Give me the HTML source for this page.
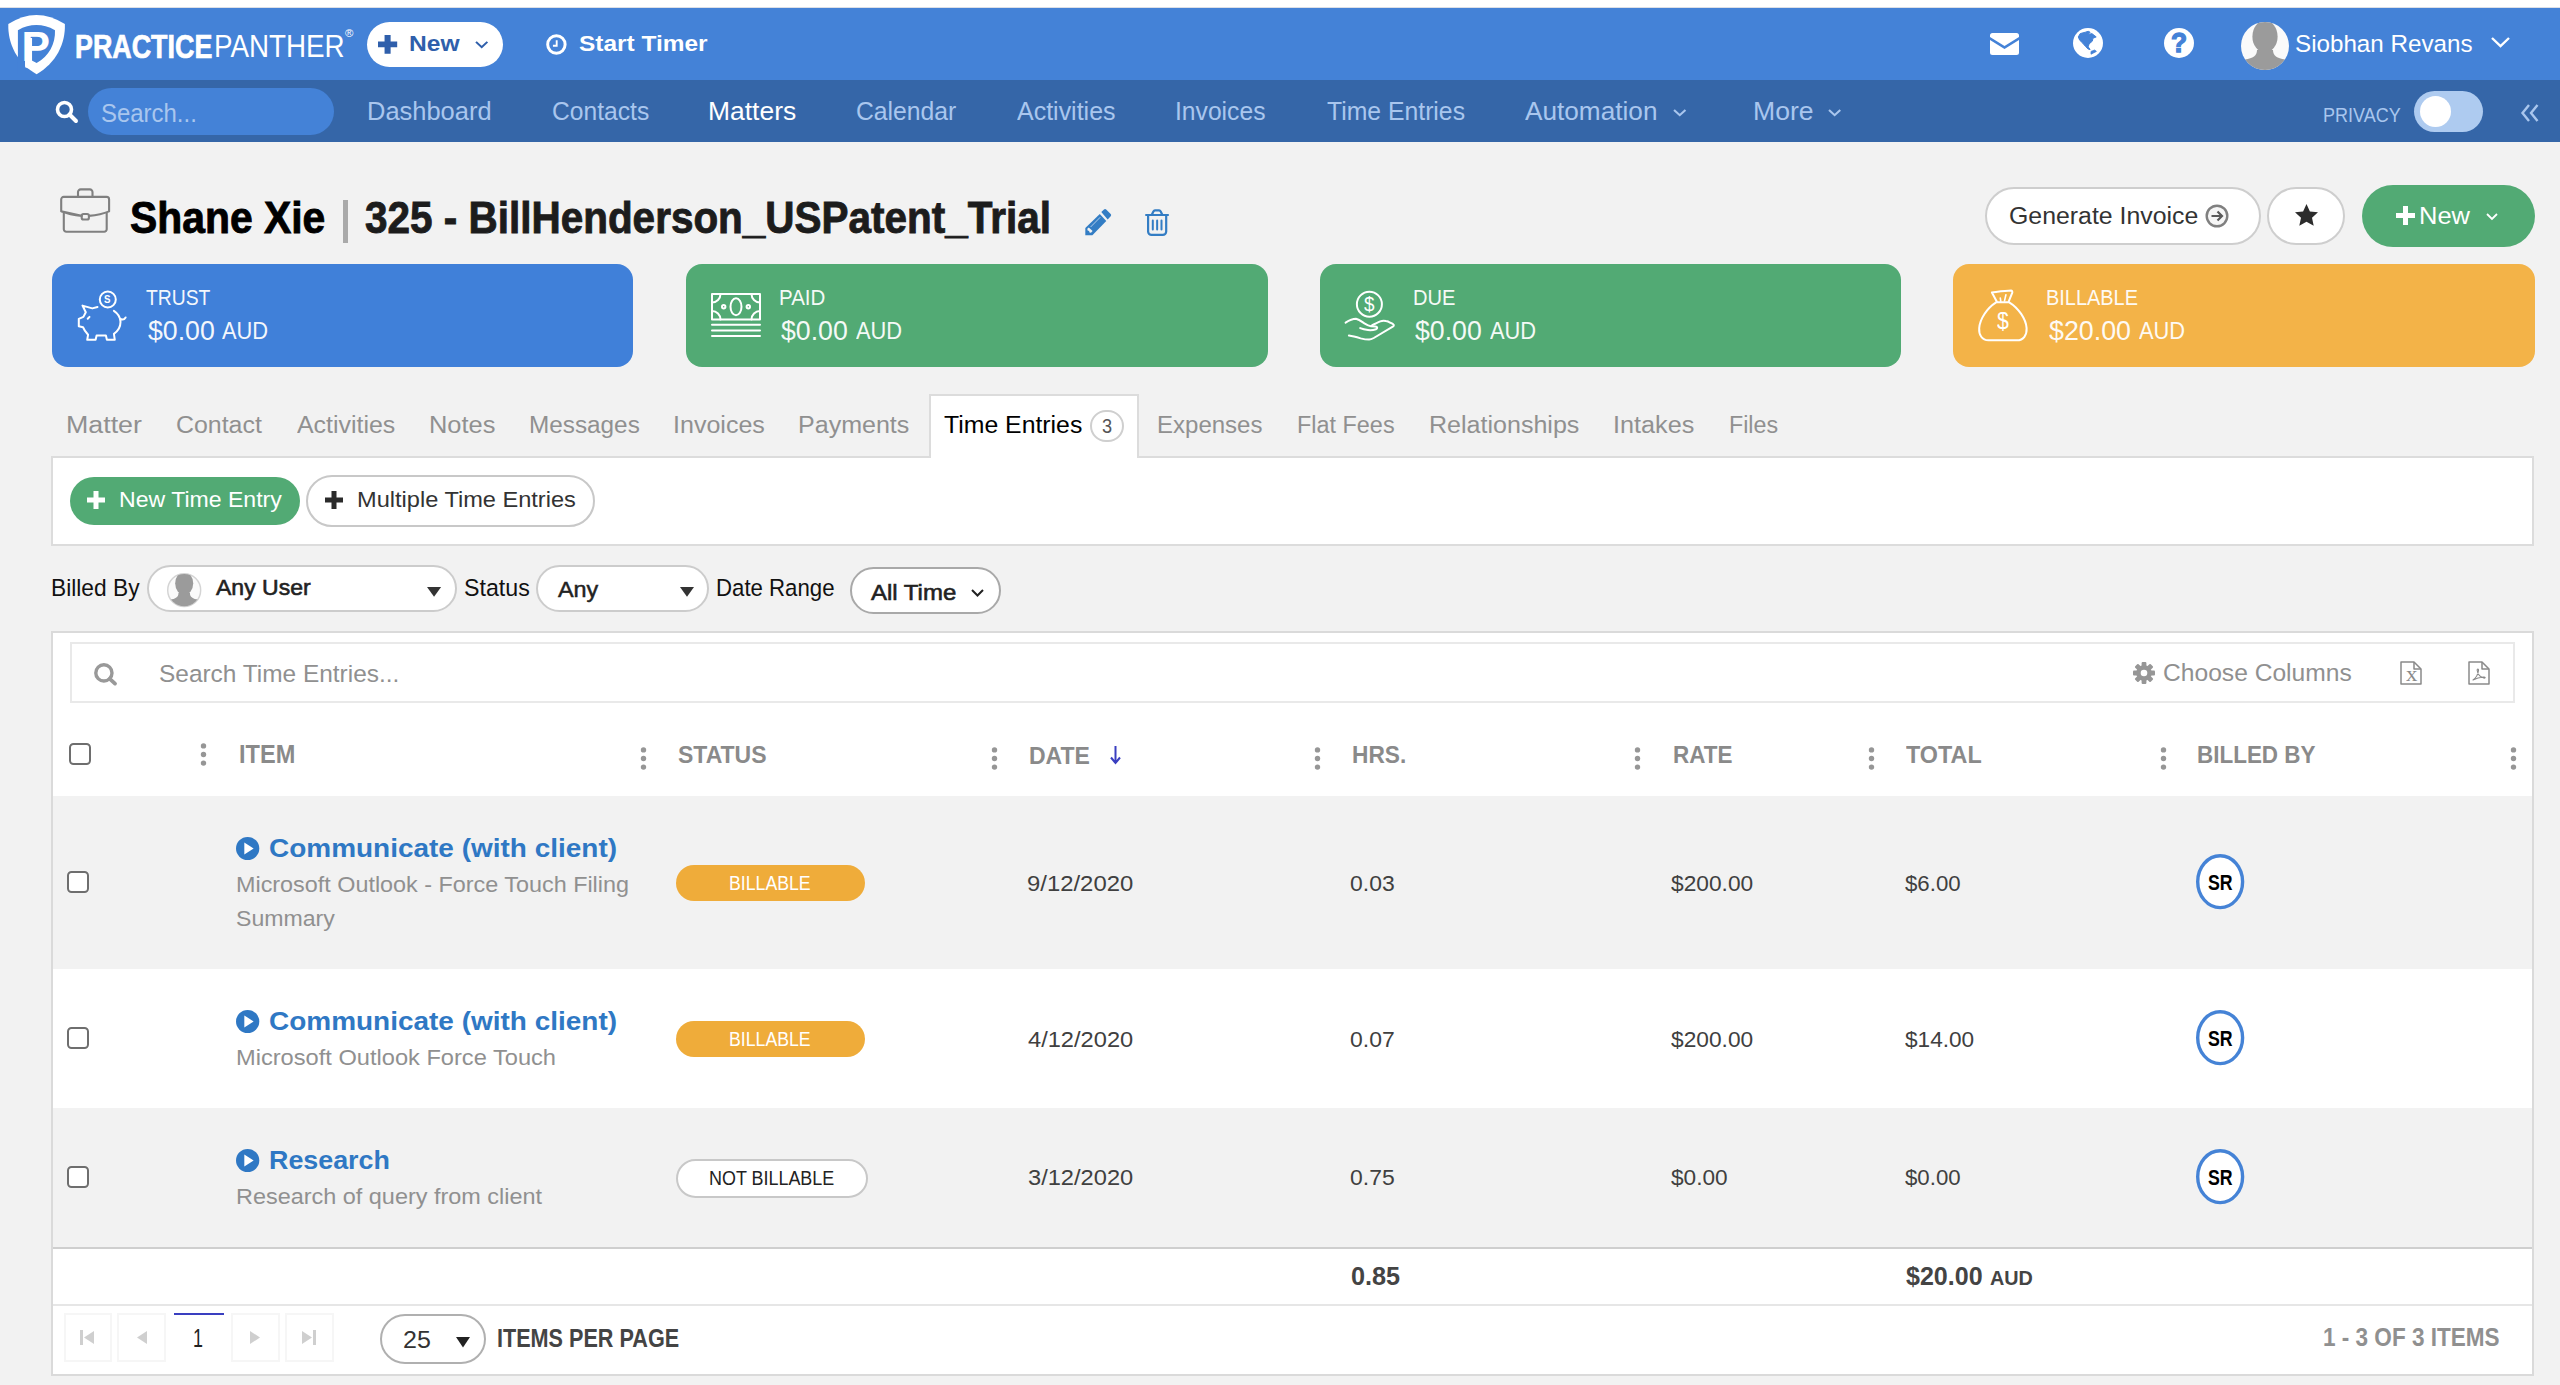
<!DOCTYPE html>
<html lang="en"><head><meta charset="utf-8"><title>PracticePanther - Time Entries</title>
<style>
html,body{margin:0;padding:0;}
body{width:2560px;height:1385px;overflow:hidden;position:relative;background:#f2f2f2;font-family:"Liberation Sans", sans-serif;}
.a{position:absolute;box-sizing:border-box;}
.t{position:absolute;white-space:nowrap;line-height:1;transform-origin:0 0;font-family:"Liberation Sans", sans-serif;}
svg{overflow:visible;}
</style></head><body>
<div class="a" style="left:0px;top:0px;width:2560px;height:8px;background:#ffffff;"></div>
<div class="a" style="left:0px;top:7px;width:2560px;height:1px;background:#dcdfe6;"></div>
<div class="a" style="left:0px;top:8px;width:2560px;height:72px;background:#4482d7;"></div>
<div class="a" style="left:0px;top:80px;width:2560px;height:62px;background:#3566a8;"></div>
<svg class="a" style="left:0px;top:8px;" width="70" height="72" viewBox="0 0 70 72" preserveAspectRatio="none">
<path d="M8.3 16Q36.3 -2.2 64.9 16C65.5 36 56 55 36.6 66.2C17.2 55 7.7 36 8.3 16Z" fill="#fff"/>
<path d="M17.9 22.2Q36.3 12 55 22.2C55.5 36 49 48 36.6 55L25.1 48.9V66H17.9Z" fill="#4482d7"/>
<path d="M25.1 30H32.05V62L25.1 59.3Z" fill="#fff"/>
<text x="21.6" y="52.6" font-family="Liberation Sans, sans-serif" font-weight="bold" font-size="42.7" fill="#fff" transform="translate(21.6 0) scale(1.0 1) translate(-21.6 0)">P</text>
</svg>
<span class="t" style="left:74.64px;top:30.87px;font-size:32.29px;color:#fff;transform:scaleX(0.8322);font-weight:bold;-webkit-text-stroke:0.7px #fff;">PRACTICE</span>
<span class="t" style="left:214.26px;top:31.21px;font-size:31.88px;color:#fff;transform:scaleX(0.8712);">PANTHER</span>
<span class="t" style="left:345.0px;top:28.37px;font-size:11.38px;color:#fff;transform:scaleX(1.0);">®</span>
<div class="a" style="left:367px;top:22px;width:136px;height:45px;background:#fff;border-radius:23px;"></div>
<svg class="a" style="left:377.6px;top:34.6px;" width="19.19999999999999" height="18.799999999999997" viewBox="0 0 19 19" preserveAspectRatio="none"><path d="M6.500 0h6v6.500h6.500v6h-6.500v6.500h-6v-6.500H0v-6h6.500z" fill="#2f5fab"/></svg>
<span class="t" style="left:408.91px;top:33.10px;font-size:22.56px;color:#2f5fab;transform:scaleX(1.0912);font-weight:bold;">New</span>
<svg class="a" style="left:475.3px;top:41.3px;" width="13.399999999999977" height="7.5" viewBox="0 0 13 8" preserveAspectRatio="none"><path d="M1 1l5.5 5.5L12 1" fill="none" stroke="#2f5fab" stroke-width="2"/></svg>
<svg class="a" style="left:546.2px;top:34px;" width="20.799999999999955" height="21" viewBox="0 0 21 21" preserveAspectRatio="none"><circle cx="10.500" cy="10.500" r="8.800" fill="none" stroke="#fff" stroke-width="3"/><path d="M10.800 6.200v5.600H7" fill="none" stroke="#fff" stroke-width="1.900"/></svg>
<span class="t" style="left:578.7px;top:33.10px;font-size:22.56px;color:#fff;transform:scaleX(1.0829);font-weight:bold;">Start Timer</span>
<svg class="a" style="left:1990px;top:33px;" width="29" height="22" viewBox="0 0 29 22" preserveAspectRatio="none"><path d="M2.5 0h24a2.5 2.5 0 0 1 2.5 2.5V4L14.5 13 0 4V2.5A2.500 2.500 0 0 1 2.500 0z" fill="#fff"/><path d="M0 7l14.500 9L29 7v12.500a2.500 2.500 0 0 1-2.500 2.500h-24A2.500 2.500 0 0 1 0 19.500z" fill="#fff"/></svg>
<svg class="a" style="left:2073px;top:27.8px;" width="30" height="29.999999999999996" viewBox="0 0 30 30" preserveAspectRatio="none"><circle cx="15" cy="15" r="15" fill="#fff"/><path d="M5.300 8.900L7.200 5.600 12.400 4.200 15.200 3.300 17.100 4.200 15.200 6.600 18.900 5.600 23.200 8.900 19.900 10.300 19.400 13.100 16.100 15.900 15.200 18.800 17.100 21.600 15.200 21.100 12.400 18.300 9.600 15 6.700 12.200Z" fill="#4482d7" stroke="#4482d7" stroke-width="1" stroke-linejoin="round"/><path d="M18 23.400L21.700 22 23.400 23.400 18 26.200Z" fill="#4482d7" stroke="#4482d7" stroke-width=".8" stroke-linejoin="round"/></svg>
<svg class="a" style="left:2164px;top:27.8px;" width="30" height="29.999999999999996" viewBox="0 0 30 30" preserveAspectRatio="none"><circle cx="15" cy="15" r="15" fill="#fff"/></svg>
<span class="t" style="left:2170.84px;top:29.48px;font-size:27.43px;color:#4482d7;transform:scaleX(0.96);font-weight:bold;-webkit-text-stroke:1.3px #4482d7;">?</span>
<svg class="a" style="left:2240.8px;top:22px;" width="48.0" height="48" viewBox="0 0 48 48" preserveAspectRatio="none"><defs><clipPath id="av1"><circle cx="24" cy="24" r="24"/></clipPath></defs><circle cx="24" cy="24" r="24" fill="#fafafa"/><g clip-path="url(#av1)" fill="#9b9b9b"><ellipse cx="24" cy="14.500" rx="12.600" ry="16"/><path d="M16 28C16 34 12 36 4 37.500L-2 38V50H50V38L44 37.500C36 36 32 34 32 28Z"/></g></svg>
<span class="t" style="left:2295.38px;top:33.04px;font-size:23.7px;color:#fff;transform:scaleX(1.021);">Siobhan Revans</span>
<svg class="a" style="left:2491px;top:37px;" width="19" height="10" viewBox="0 0 19 10" preserveAspectRatio="none"><path d="M1 1l8.5 8L18 1" fill="none" stroke="#fff" stroke-width="2.4"/></svg>
<svg class="a" style="left:55px;top:100px;" width="23" height="23" viewBox="0 0 23 23" preserveAspectRatio="none"><circle cx="9.500" cy="9.500" r="7" fill="none" stroke="#fff" stroke-width="3.600"/><path d="M14.500 14.500l6.500 6.500" stroke="#fff" stroke-width="4" stroke-linecap="round"/></svg>
<div class="a" style="left:88px;top:88px;width:246px;height:47px;background:#4482d7;border-radius:24px;"></div>
<span class="t" style="left:101.04px;top:100.89px;font-size:24.94px;color:#a9c6ee;transform:scaleX(0.96);">Search...</span>
<span class="t" style="left:366.67px;top:98.80px;font-size:25.05px;color:#a9c6ee;transform:scaleX(1.0167);">Dashboard</span>
<span class="t" style="left:551.82px;top:98.80px;font-size:25.05px;color:#a9c6ee;transform:scaleX(0.9834);">Contacts</span>
<span class="t" style="left:707.89px;top:98.80px;font-size:25.05px;color:#fff;transform:scaleX(1.0558);">Matters</span>
<span class="t" style="left:856.01px;top:98.80px;font-size:25.05px;color:#a9c6ee;transform:scaleX(0.987);">Calendar</span>
<span class="t" style="left:1017.0px;top:98.80px;font-size:25.05px;color:#a9c6ee;transform:scaleX(0.997);">Activities</span>
<span class="t" style="left:1175.03px;top:98.80px;font-size:25.05px;color:#a9c6ee;transform:scaleX(0.9848);">Invoices</span>
<span class="t" style="left:1327.0px;top:98.80px;font-size:25.05px;color:#a9c6ee;transform:scaleX(0.9884);">Time Entries</span>
<span class="t" style="left:1525.0px;top:98.80px;font-size:25.05px;color:#a9c6ee;transform:scaleX(1.0455);">Automation</span>
<span class="t" style="left:1752.88px;top:98.80px;font-size:25.05px;color:#a9c6ee;transform:scaleX(1.0622);">More</span>
<svg class="a" style="left:1672.8px;top:108.5px;" width="13.5" height="7.700000000000003" viewBox="0 0 13 8" preserveAspectRatio="none"><path d="M1 1l5.500 5.500L12 1" fill="none" stroke="#a9c6ee" stroke-width="2"/></svg>
<svg class="a" style="left:1828px;top:108.5px;" width="13.299999999999955" height="7.700000000000003" viewBox="0 0 13 8" preserveAspectRatio="none"><path d="M1 1l5.500 5.500L12 1" fill="none" stroke="#a9c6ee" stroke-width="2"/></svg>
<span class="t" style="left:2323.41px;top:104.52px;font-size:20.18px;color:#a9c6ee;transform:scaleX(0.8926);">PRIVACY</span>
<div class="a" style="left:2414px;top:91px;width:69px;height:41px;background:#aecbf0;border-radius:21px;"></div>
<div class="a" style="left:2420px;top:96px;width:31px;height:31px;background:#fff;border-radius:16px;"></div>
<svg class="a" style="left:2521px;top:104px;" width="18" height="18" viewBox="0 0 18 18" preserveAspectRatio="none"><path d="M8 1L1.500 9 8 17M16.500 1L10 9l6.500 8" fill="none" stroke="#a9c6ee" stroke-width="2.400"/></svg>
<svg class="a" style="left:60px;top:188px;" width="51" height="46" viewBox="0 0 51 46" preserveAspectRatio="none"><g fill="none" stroke="#808080" stroke-width="2.100" stroke-linejoin="round">
<path d="M1.200 23.400V11.400a2.500 2.500 0 0 1 2.500-2.500H46.600a2.500 2.500 0 0 1 2.500 2.500V23.400C43 26 36 27.300 28.900 27.900M21.700 27.900C14.500 27.300 7.500 26 1.200 23.400Z"/>
<path d="M3.800 24.500V41.200a2.500 2.500 0 0 0 2.500 2.500H44.200a2.500 2.500 0 0 0 2.500-2.500V24.500"/>
<path d="M18 8.900V4a2.600 2.600 0 0 1 2.600-2.600H29.900A2.600 2.600 0 0 1 32.500 4V8.900"/>
<rect x="21.700" y="26" width="7.200" height="5.500" rx="1.800"/></g></svg>
<span class="t" style="left:130.07px;top:195.76px;font-size:43.99px;color:#000;transform:scaleX(0.9289);font-weight:bold;-webkit-text-stroke:0.9px #000;">Shane Xie</span>
<div class="a" style="left:343px;top:200px;width:5px;height:43px;background:#aaaaaa;"></div>
<span class="t" style="left:365.08px;top:195.76px;font-size:43.99px;color:#1c1c1c;transform:scaleX(0.9201);font-weight:bold;-webkit-text-stroke:0.9px #1c1c1c;">325 - BillHenderson_USPatent_Trial</span>
<svg class="a" style="left:1084.9px;top:209.1px;" width="26.199999999999818" height="26.5" viewBox="0 0 26.2 26.5" preserveAspectRatio="none"><g fill="#337dc4"><path d="M16.300 3 19 .6a1.600 1.600 0 0 1 2.200 0L25.700 5a1.600 1.600 0 0 1 0 2.200L22.700 10.400Z"/><path d="M14.800 4.900L21.300 12 7.400 26.200H.3V19.100Z"/></g><path d="M5.600 18L15.300 8.200" stroke="#cfe0f2" stroke-width=".8" fill="none"/><path d="M2.300 19.800l1.500-1.300 3.800 3.600-1.600 1.700-1.500-.4-.4-1.500-1.500-.4z" fill="#f2f2f2"/></svg>
<svg class="a" style="left:1145px;top:208.6px;" width="24.09999999999991" height="27.099999999999994" viewBox="0 0 24.1 27.1" preserveAspectRatio="none"><g fill="none" stroke="#337dc4" stroke-width="2.200" stroke-linecap="round" stroke-linejoin="round"><path d="M1.100 6H23"/><path d="M6.800 5.700L8.400 2.400a1.800 1.800 0 0 1 1.600-1h4.100a1.800 1.800 0 0 1 1.600 1L17.300 5.700"/><path d="M3.100 6.500V22.500a3.400 3.400 0 0 0 3.400 3.400H17.800a3.400 3.400 0 0 0 3.400-3.400V6.500"/><path d="M7.800 11.400v9.200M12.150 11.400v9.200M16.500 11.400v9.200" stroke-width="2"/></g></svg>
<div class="a" style="left:1985px;top:187px;width:276px;height:58px;background:#fff;border:2px solid #cecece;border-radius:29px;"></div>
<span class="t" style="left:2009.0px;top:203.77px;font-size:24.84px;color:#333;transform:scaleX(1.0012);">Generate Invoice</span>
<svg class="a" style="left:2205px;top:204px;" width="24" height="24" viewBox="0 0 24 24" preserveAspectRatio="none"><circle cx="12" cy="12" r="10.300" fill="#f6f6f6" stroke="#808080" stroke-width="2.400"/><path d="M6.500 12h10M12.500 7.500l4.500 4.500-4.500 4.500" fill="none" stroke="#5a5a5a" stroke-width="2.200"/></svg>
<div class="a" style="left:2267px;top:187px;width:78px;height:58px;background:#fff;border:2px solid #cecece;border-radius:29px;"></div>
<svg class="a" style="left:2295px;top:204px;" width="23" height="22" viewBox="0 0 23 22" preserveAspectRatio="none"><path d="M11.500 0l3.400 7.400 8.100.9-6 5.500 1.700 8-7.200-4.100L4.300 21.800l1.700-8-6-5.500 8.100-.9z" fill="#2c2c2c"/></svg>
<div class="a" style="left:2362px;top:185px;width:173px;height:62px;background:#52aa74;border-radius:31px;"></div>
<svg class="a" style="left:2396px;top:206px;" width="19" height="19" viewBox="0 0 19 19" preserveAspectRatio="none"><path d="M7 0h5v7h7v5h-7v7H7v-7H0V7h7z" fill="#fff"/></svg>
<span class="t" style="left:2418.95px;top:203.77px;font-size:24.84px;color:#fff;transform:scaleX(1.0264);">New</span>
<svg class="a" style="left:2486px;top:213px;" width="12" height="7" viewBox="0 0 12 7" preserveAspectRatio="none"><path d="M1 1l5 5 5-5" fill="none" stroke="#fff" stroke-width="1.800"/></svg>
<div class="a" style="left:52px;top:264px;width:581px;height:103px;background:#4080d9;border-radius:16px;"></div>
<span class="t" style="left:146.3px;top:286.50px;font-size:22.56px;color:#fff;transform:scaleX(0.857);opacity:.94;">TRUST</span>
<span class="t" style="left:147.7px;top:315.71px;font-size:28.46px;color:#fff;transform:scaleX(0.9378);opacity:.94;">$0.00</span>
<span class="t" style="left:222.3px;top:320.00px;font-size:23.39px;color:#fff;transform:scaleX(0.9346);opacity:.94;">AUD</span>
<div class="a" style="left:685.5px;top:264px;width:582.5px;height:103px;background:#52aa74;border-radius:16px;"></div>
<span class="t" style="left:778.89px;top:286.50px;font-size:22.56px;color:#fff;transform:scaleX(0.9101);opacity:.94;">PAID</span>
<span class="t" style="left:781.2px;top:315.71px;font-size:28.46px;color:#fff;transform:scaleX(0.9378);opacity:.94;">$0.00</span>
<span class="t" style="left:855.8px;top:320.00px;font-size:23.39px;color:#fff;transform:scaleX(0.9346);opacity:.94;">AUD</span>
<div class="a" style="left:1319.5px;top:264px;width:581.5px;height:103px;background:#52aa74;border-radius:16px;"></div>
<span class="t" style="left:1412.91px;top:286.50px;font-size:22.56px;color:#fff;transform:scaleX(0.8912);opacity:.94;">DUE</span>
<span class="t" style="left:1415.2px;top:315.71px;font-size:28.46px;color:#fff;transform:scaleX(0.9378);opacity:.94;">$0.00</span>
<span class="t" style="left:1489.8px;top:320.00px;font-size:23.39px;color:#fff;transform:scaleX(0.9346);opacity:.94;">AUD</span>
<div class="a" style="left:1953px;top:264px;width:581.5px;height:103px;background:#f3b348;border-radius:16px;"></div>
<span class="t" style="left:2046.42px;top:286.50px;font-size:22.56px;color:#fff;transform:scaleX(0.8835);opacity:.94;">BILLABLE</span>
<span class="t" style="left:2048.7px;top:315.71px;font-size:28.46px;color:#fff;transform:scaleX(0.942);opacity:.94;">$20.00</span>
<span class="t" style="left:2138.5px;top:320.00px;font-size:23.39px;color:#fff;transform:scaleX(0.9346);opacity:.94;">AUD</span>
<svg class="a" style="left:78px;top:290px;" width="49" height="51" viewBox="0 0 49 51" preserveAspectRatio="none"><g fill="none" stroke="#fff" stroke-width="2" stroke-linecap="round" stroke-linejoin="round"><circle cx="29.800" cy="9.500" r="8"/>
<path d="M19.500 17L14.300 18.400 4.500 15.600 7.800 22.200 5.400 26.900 .8 28.800V36.200L5 37.200C6 40 8 42.500 10.100 44.700L9.200 49.800H17.600L18.600 45.600H27.900L28.900 49.800H36.800L35.900 43.800C40 41 42.500 37 42.500 32 42.500 27.500 40 23.500 35.900 20.800"/>
<path d="M42.200 29C44.500 30 46.500 29.500 47.600 27.500"/><path d="M9.700 28.800L11.500 26.900"/></g></svg>
<span class="t" style="left:104.4px;top:293.97px;font-size:11.38px;color:#fff;transform:scaleX(0.85);font-weight:bold;">S</span>
<svg class="a" style="left:711px;top:293px;" width="50" height="45" viewBox="0 0 50 45" preserveAspectRatio="none"><g fill="none" stroke="#fff" stroke-width="2" stroke-linecap="round" stroke-linejoin="round"><rect x="1" y="1" width="48" height="25.500"/>
<ellipse cx="25" cy="13.700" rx="5.500" ry="8.500"/><circle cx="12.700" cy="13.700" r="1.700"/><circle cx="37.300" cy="13.700" r="1.700"/>
<path d="M1 9.500a8.500 8.500 0 0 0 8.500-8.500M49 9.500a8.500 8.500 0 0 1-8.500-8.500M1 18a8.500 8.500 0 0 1 8.500 8.500M49 18a8.500 8.500 0 0 0-8.500 8.500"/>
<path d="M1 31.800h48M1 37.500h48M1 43.100h48"/></g></svg>
<svg class="a" style="left:1345px;top:291px;" width="49" height="50" viewBox="0 0 49 50" preserveAspectRatio="none"><g fill="none" stroke="#fff" stroke-width="2" stroke-linecap="round" stroke-linejoin="round"><circle cx="24.400" cy="13.200" r="12.500"/>
<path d="M.6 31.700C4 29.500 7.500 27.800 10.900 27.800 14 28.500 17 30.800 19.400 32.400 22 34 24 35 25.900 35.300L30.500 35.600C32.500 35.800 32.800 37.600 31 38.200 28 39.200 25.500 39.300 23 39 20 38.600 17.500 38 15.200 37.100"/>
<path d="M26.900 34.300C30 33 32.500 31.500 35.300 30.400 37 29.800 39 29.700 40.900 30.100 42.500 30.300 43.800 30.800 44.700 31.500 46.300 31.900 47.600 32.500 48.400 33.400 49 34 48.900 34.800 48.200 35.300L28.750 47C27 48 25.500 48.600 24.100 48.600 21 48.600 18 48 15.600 47.400 11 46 7 45 3.900 44.600"/></g></svg>
<span class="t" style="left:1363.9px;top:294.32px;font-size:20.18px;color:#fff;transform:scaleX(0.9364);">$</span>
<svg class="a" style="left:1979px;top:290px;" width="49" height="51" viewBox="0 0 49 51" preserveAspectRatio="none"><g fill="none" stroke="#fff" stroke-width="2" stroke-linecap="round" stroke-linejoin="round"><path d="M17.100 12.300C8 18 .8 29 .2 38.100-.3 45 3 50.300 9.500 50.300H38C44.500 50.300 48 45 47.600 38.100 47 29 39.500 18 30.200 12.300Z"/>
<path d="M18 11.900L12.900 2.500C19 1.800 26 .8 32.100 .6 33.500 .8 33.600 2.300 33 3.400L29.750 11.400"/><path d="M21.300 8.100L21.800 11.400M26.900 4.800L25.500 10.900" stroke-width="1.600"/></g></svg>
<span class="t" style="left:1997.0px;top:309.62px;font-size:23.49px;color:#fff;transform:scaleX(0.9038);">$</span>
<span class="t" style="left:65.83px;top:413.25px;font-size:24.63px;color:#909090;transform:scaleX(1.0875);">Matter</span>
<span class="t" style="left:175.99px;top:413.25px;font-size:24.63px;color:#909090;transform:scaleX(1.0116);">Contact</span>
<span class="t" style="left:297.0px;top:413.25px;font-size:24.63px;color:#909090;transform:scaleX(1.012);">Activities</span>
<span class="t" style="left:428.94px;top:413.25px;font-size:24.63px;color:#909090;transform:scaleX(1.032);">Notes</span>
<span class="t" style="left:529.03px;top:413.25px;font-size:24.63px;color:#909090;transform:scaleX(0.9871);">Messages</span>
<span class="t" style="left:672.97px;top:413.25px;font-size:24.63px;color:#909090;transform:scaleX(1.0168);">Invoices</span>
<span class="t" style="left:797.97px;top:413.25px;font-size:24.63px;color:#909090;transform:scaleX(1.017);">Payments</span>
<span class="t" style="left:1157.35px;top:413.25px;font-size:24.63px;color:#909090;transform:scaleX(0.9751);">Expenses</span>
<span class="t" style="left:1297.4px;top:413.25px;font-size:24.63px;color:#909090;transform:scaleX(0.9509);">Flat Fees</span>
<span class="t" style="left:1428.77px;top:413.25px;font-size:24.63px;color:#909090;transform:scaleX(1.017);">Relationships</span>
<span class="t" style="left:1612.85px;top:413.25px;font-size:24.63px;color:#909090;transform:scaleX(1.0236);">Intakes</span>
<span class="t" style="left:1728.51px;top:413.25px;font-size:24.63px;color:#909090;transform:scaleX(0.9441);">Files</span>
<div class="a" style="left:51px;top:456px;width:2483px;height:90px;background:#fff;border:2px solid #dcdcdc;"></div>
<div class="a" style="left:929px;top:394px;width:210px;height:64px;background:#fff;border:2px solid #dcdcdc;border-bottom:none;"></div>
<span class="t" style="left:944.0px;top:413.25px;font-size:24.63px;color:#000;transform:scaleX(1.0075);">Time Entries</span>
<div class="a" style="left:1090px;top:410px;width:34px;height:32px;background:#fff;border:2px solid #cfcfcf;border-radius:17px;"></div>
<span class="t" style="left:1102.0px;top:416.09px;font-size:19.98px;color:#555;transform:scaleX(0.9091);">3</span>
<div class="a" style="left:70px;top:477px;width:230px;height:48px;background:#52aa74;border-radius:24px;"></div>
<svg class="a" style="left:87px;top:491px;" width="18" height="18" viewBox="0 0 18 18" preserveAspectRatio="none"><path d="M6.500 0h5v6.500h6.500v5h-6.500v6.500h-5v-6.500H0v-5h6.500z" fill="#fff"/></svg>
<span class="t" style="left:118.97px;top:488.99px;font-size:22.46px;color:#fff;transform:scaleX(1.0275);">New Time Entry</span>
<div class="a" style="left:306px;top:475px;width:289px;height:52px;background:#fff;border:2px solid #c8c8c8;border-radius:26px;"></div>
<svg class="a" style="left:325px;top:491px;" width="18" height="18" viewBox="0 0 18 18" preserveAspectRatio="none"><path d="M6.500 0h5v6.500h6.500v5h-6.500v6.500h-5v-6.500H0v-5h6.500z" fill="#2b2b2b"/></svg>
<span class="t" style="left:356.95px;top:488.99px;font-size:22.46px;color:#333;transform:scaleX(1.0503);">Multiple Time Entries</span>
<span class="t" style="left:51.43px;top:577.12px;font-size:23.49px;color:#111;transform:scaleX(0.9699);">Billed By</span>
<div class="a" style="left:147px;top:565px;width:310px;height:47px;background:#fff;border:2px solid #cccccc;border-radius:24px;"></div>
<svg class="a" style="left:166.5px;top:573px;" width="34.400000000000006" height="34.299999999999955" viewBox="0 0 48 48" preserveAspectRatio="none"><defs><clipPath id="av2"><circle cx="24" cy="24" r="22.500"/></clipPath></defs><circle cx="24" cy="24" r="23" fill="#fafafa" stroke="#d4d4d4" stroke-width="2"/><g clip-path="url(#av2)" fill="#9b9b9b"><ellipse cx="24" cy="14.500" rx="12.600" ry="16"/><path d="M16 28C16 34 12 36 4 37.500L-2 38V50H50V38L44 37.500C36 36 32 34 32 28Z"/></g></svg>
<span class="t" style="left:215.9px;top:576.41px;font-size:22.67px;color:#222;transform:scaleX(1.0158);-webkit-text-stroke:0.6px #222;">Any User</span>
<svg class="a" style="left:427.4px;top:587.2px;" width="14.100000000000023" height="9.799999999999955" viewBox="0 0 13 9" preserveAspectRatio="none"><path d="M0 0h13L6.500 9z" fill="#333"/></svg>
<span class="t" style="left:463.91px;top:577.12px;font-size:23.49px;color:#111;transform:scaleX(0.9887);">Status</span>
<div class="a" style="left:536px;top:565px;width:173px;height:47px;background:#fff;border:2px solid #cccccc;border-radius:24px;"></div>
<span class="t" style="left:558.0px;top:577.81px;font-size:22.67px;color:#222;transform:scaleX(1.0324);-webkit-text-stroke:0.5px #222;">Any</span>
<svg class="a" style="left:679.5px;top:587.2px;" width="14.0" height="9.799999999999955" viewBox="0 0 13 9" preserveAspectRatio="none"><path d="M0 0h13L6.500 9z" fill="#333"/></svg>
<span class="t" style="left:716.05px;top:577.12px;font-size:23.49px;color:#111;transform:scaleX(0.9455);">Date Range</span>
<div class="a" style="left:850px;top:567px;width:151px;height:47px;background:#fff;border:2px solid #a9a9a9;border-radius:24px;"></div>
<span class="t" style="left:870.5px;top:581.31px;font-size:22.67px;color:#222;transform:scaleX(1.0575);-webkit-text-stroke:0.6px #222;">All Time</span>
<svg class="a" style="left:971px;top:589px;" width="13" height="8" viewBox="0 0 13 8" preserveAspectRatio="none"><path d="M1 1l5.500 5.500L12 1" fill="none" stroke="#222" stroke-width="2"/></svg>
<div class="a" style="left:51px;top:631px;width:2483px;height:745px;background:#fff;border:2px solid #dadada;"></div>
<div class="a" style="left:70px;top:642px;width:2445px;height:61px;background:#fff;border:2px solid #e9e9e9;"></div>
<svg class="a" style="left:94.2px;top:662.5px;" width="23.0" height="22.0" viewBox="0 0 23 22" preserveAspectRatio="none"><circle cx="9.900" cy="9.900" r="8.100" fill="none" stroke="#999" stroke-width="3.400"/><path d="M15.800 15.800l5.200 4.800" stroke="#999" stroke-width="3.800" stroke-linecap="round"/></svg>
<span class="t" style="left:159.21px;top:662.46px;font-size:24.74px;color:#909090;transform:scaleX(0.9876);">Search Time Entries...</span>
<svg class="a" style="left:2133px;top:662px;" width="22" height="22" viewBox="0 0 22 22" preserveAspectRatio="none"><g fill="#969696"><circle cx="11" cy="11" r="7.800"/><rect x="8.600" y="0" width="4.800" height="6" rx="1" transform="rotate(0 11 11)"/><rect x="8.600" y="0" width="4.800" height="6" rx="1" transform="rotate(45 11 11)"/><rect x="8.600" y="0" width="4.800" height="6" rx="1" transform="rotate(90 11 11)"/><rect x="8.600" y="0" width="4.800" height="6" rx="1" transform="rotate(135 11 11)"/><rect x="8.600" y="0" width="4.800" height="6" rx="1" transform="rotate(180 11 11)"/><rect x="8.600" y="0" width="4.800" height="6" rx="1" transform="rotate(225 11 11)"/><rect x="8.600" y="0" width="4.800" height="6" rx="1" transform="rotate(270 11 11)"/><rect x="8.600" y="0" width="4.800" height="6" rx="1" transform="rotate(315 11 11)"/></g><circle cx="11" cy="11" r="3.300" fill="#fff"/></svg>
<span class="t" style="left:2162.5px;top:661.24px;font-size:24.53px;color:#909090;transform:scaleX(1.0038);">Choose Columns</span>
<svg class="a" style="left:2400px;top:661px;" width="22" height="24" viewBox="0 0 22 24" preserveAspectRatio="none"><g fill="none" stroke="#8a8a8a" stroke-width="1.500" stroke-linejoin="round"><path d="M1 1h13l7 7v15H1z"/><path d="M14 1v7h7"/></g></svg>
<span class="t" style="left:2405.5px;top:663.61px;font-size:21.73px;color:#8a8a8a;transform:scaleX(1.0455);font-family:'Liberation Serif',serif;">x</span>
<svg class="a" style="left:2468px;top:661px;" width="22" height="24" viewBox="0 0 22 24" preserveAspectRatio="none"><g fill="none" stroke="#8a8a8a" stroke-width="1.500" stroke-linejoin="round"><path d="M1 1h13l7 7v15H1z"/><path d="M14 1v7h7"/><path d="M5 19c3-2 5-6 5.500-9.500.3-2-1.500-2-1.300 0 .5 3.500 3 6.500 6.500 7.500 2 .5 2-1.200 0-1-3.500.3-7.500 1.300-10.700 3z" stroke-width="1.100"/></g></svg>
<div class="a" style="left:69px;top:743px;width:22px;height:22px;background:#fff;border:2px solid #6e6e6e;border-radius:4.5px;"></div>
<svg class="a" style="left:200px;top:742.8px;" width="7" height="23.0" viewBox="0 0 7 23" preserveAspectRatio="none"><g fill="#969696"><circle cx="3.500" cy="2.900" r="2.700"/><circle cx="3.500" cy="11.500" r="2.700"/><circle cx="3.500" cy="20.100" r="2.700"/></g></svg>
<svg class="a" style="left:639.5px;top:746.5px;" width="7.0" height="23.0" viewBox="0 0 7 23" preserveAspectRatio="none"><g fill="#969696"><circle cx="3.500" cy="2.900" r="2.700"/><circle cx="3.500" cy="11.500" r="2.700"/><circle cx="3.500" cy="20.100" r="2.700"/></g></svg>
<svg class="a" style="left:991px;top:746.5px;" width="7" height="23.0" viewBox="0 0 7 23" preserveAspectRatio="none"><g fill="#969696"><circle cx="3.500" cy="2.900" r="2.700"/><circle cx="3.500" cy="11.500" r="2.700"/><circle cx="3.500" cy="20.100" r="2.700"/></g></svg>
<svg class="a" style="left:1314px;top:746.5px;" width="7" height="23.0" viewBox="0 0 7 23" preserveAspectRatio="none"><g fill="#969696"><circle cx="3.500" cy="2.900" r="2.700"/><circle cx="3.500" cy="11.500" r="2.700"/><circle cx="3.500" cy="20.100" r="2.700"/></g></svg>
<svg class="a" style="left:1634px;top:746.5px;" width="7" height="23.0" viewBox="0 0 7 23" preserveAspectRatio="none"><g fill="#969696"><circle cx="3.500" cy="2.900" r="2.700"/><circle cx="3.500" cy="11.500" r="2.700"/><circle cx="3.500" cy="20.100" r="2.700"/></g></svg>
<svg class="a" style="left:1867.5px;top:746.5px;" width="7.0" height="23.0" viewBox="0 0 7 23" preserveAspectRatio="none"><g fill="#969696"><circle cx="3.500" cy="2.900" r="2.700"/><circle cx="3.500" cy="11.500" r="2.700"/><circle cx="3.500" cy="20.100" r="2.700"/></g></svg>
<svg class="a" style="left:2160px;top:746.5px;" width="7" height="23.0" viewBox="0 0 7 23" preserveAspectRatio="none"><g fill="#969696"><circle cx="3.500" cy="2.900" r="2.700"/><circle cx="3.500" cy="11.500" r="2.700"/><circle cx="3.500" cy="20.100" r="2.700"/></g></svg>
<svg class="a" style="left:2509.5px;top:746.5px;" width="7.0" height="23.0" viewBox="0 0 7 23" preserveAspectRatio="none"><g fill="#969696"><circle cx="3.500" cy="2.900" r="2.700"/><circle cx="3.500" cy="11.500" r="2.700"/><circle cx="3.500" cy="20.100" r="2.700"/></g></svg>
<span class="t" style="left:238.87px;top:741.93px;font-size:25.36px;color:#8a8a8a;transform:scaleX(0.929);font-weight:bold;">ITEM</span>
<span class="t" style="left:677.5px;top:742.97px;font-size:24.84px;color:#8a8a8a;transform:scaleX(0.9257);font-weight:bold;">STATUS</span>
<span class="t" style="left:1029.07px;top:743.97px;font-size:24.84px;color:#8a8a8a;transform:scaleX(0.927);font-weight:bold;">DATE</span>
<svg class="a" style="left:1110px;top:745.5px;" width="11" height="18.5" viewBox="0 0 11 18.500" preserveAspectRatio="none"><path d="M5.500 0v16M1 11.500l4.500 5.500 4.500-5.500" fill="none" stroke="#3a3fc0" stroke-width="2"/></svg>
<span class="t" style="left:1351.59px;top:742.97px;font-size:24.84px;color:#8a8a8a;transform:scaleX(0.9143);font-weight:bold;">HRS.</span>
<span class="t" style="left:1672.6px;top:742.97px;font-size:24.84px;color:#8a8a8a;transform:scaleX(0.9037);font-weight:bold;">RATE</span>
<span class="t" style="left:1906.0px;top:742.97px;font-size:24.84px;color:#8a8a8a;transform:scaleX(0.9404);font-weight:bold;">TOTAL</span>
<span class="t" style="left:2197.1px;top:742.97px;font-size:24.84px;color:#8a8a8a;transform:scaleX(0.9044);font-weight:bold;">BILLED BY</span>
<div class="a" style="left:53px;top:796px;width:2479px;height:173px;background:#f2f2f2;"></div>
<div class="a" style="left:53px;top:1108px;width:2479px;height:140px;background:#f2f2f2;"></div>
<div class="a" style="left:67px;top:871px;width:22px;height:22px;background:#fff;border:2px solid #6e6e6e;border-radius:4.5px;"></div>
<svg class="a" style="left:236.2px;top:836.8px;" width="23.30000000000001" height="23.0" viewBox="0 0 23 23" preserveAspectRatio="none"><circle cx="11.500" cy="11.500" r="11.500" fill="#2f78c4"/><path d="M8.200 5.400l9.200 6.100-9.200 6.100z" fill="#fff"/></svg>
<span class="t" style="left:269.03px;top:834.92px;font-size:26.08px;color:#2f78c4;transform:scaleX(1.0723);font-weight:bold;">Communicate (with client)</span>
<span class="t" style="left:236.27px;top:872.63px;font-size:22.77px;color:#909090;transform:scaleX(1.0262);">Microsoft Outlook - Force Touch Filing</span>
<span class="t" style="left:236.29px;top:907.13px;font-size:22.77px;color:#909090;transform:scaleX(1.0143);">Summary</span>
<div class="a" style="left:676px;top:865px;width:189px;height:36px;background:#efac3a;border-radius:18px;"></div>
<span class="t" style="left:729.2px;top:874.06px;font-size:19.77px;color:#fff;transform:scaleX(0.8954);">BILLABLE</span>
<span class="t" style="left:1026.95px;top:871.53px;font-size:22.77px;color:#404040;transform:scaleX(1.049);">9/12/2020</span>
<span class="t" style="left:1350.0px;top:871.53px;font-size:22.77px;color:#404040;transform:scaleX(1.0081);">0.03</span>
<span class="t" style="left:1671.0px;top:871.53px;font-size:22.77px;color:#404040;transform:scaleX(0.9984);">$200.00</span>
<span class="t" style="left:1905.0px;top:871.53px;font-size:22.77px;color:#404040;transform:scaleX(0.9768);">$6.00</span>
<svg class="a" style="left:2196.1px;top:854.4px;" width="48.30000000000018" height="55.30000000000007" viewBox="0 0 48.300 55.300" preserveAspectRatio="none"><ellipse cx="24.150" cy="27.650" rx="22.450" ry="25.950" fill="#fff" stroke="#4583d6" stroke-width="3.400"/></svg>
<span class="t" style="left:2208.2px;top:872.13px;font-size:22.05px;color:#000;transform:scaleX(0.8044);font-weight:bold;">SR</span>
<div class="a" style="left:67px;top:1027px;width:22px;height:22px;background:#fff;border:2px solid #6e6e6e;border-radius:4.5px;"></div>
<svg class="a" style="left:236.2px;top:1010.3px;" width="23.30000000000001" height="23.0" viewBox="0 0 23 23" preserveAspectRatio="none"><circle cx="11.500" cy="11.500" r="11.500" fill="#2f78c4"/><path d="M8.200 5.400l9.200 6.100-9.200 6.100z" fill="#fff"/></svg>
<span class="t" style="left:269.03px;top:1008.42px;font-size:26.08px;color:#2f78c4;transform:scaleX(1.0723);font-weight:bold;">Communicate (with client)</span>
<span class="t" style="left:236.26px;top:1046.23px;font-size:22.77px;color:#909090;transform:scaleX(1.0379);">Microsoft Outlook Force Touch</span>
<div class="a" style="left:676px;top:1021px;width:189px;height:36px;background:#efac3a;border-radius:18px;"></div>
<span class="t" style="left:729.2px;top:1030.06px;font-size:19.77px;color:#fff;transform:scaleX(0.8954);">BILLABLE</span>
<span class="t" style="left:1028.0px;top:1027.53px;font-size:22.77px;color:#404040;transform:scaleX(1.0386);">4/12/2020</span>
<span class="t" style="left:1350.0px;top:1027.53px;font-size:22.77px;color:#404040;transform:scaleX(1.0081);">0.07</span>
<span class="t" style="left:1671.0px;top:1027.53px;font-size:22.77px;color:#404040;transform:scaleX(0.9984);">$200.00</span>
<span class="t" style="left:1905.0px;top:1027.53px;font-size:22.77px;color:#404040;transform:scaleX(0.9932);">$14.00</span>
<svg class="a" style="left:2196.1px;top:1010.4px;" width="48.30000000000018" height="55.30000000000007" viewBox="0 0 48.300 55.300" preserveAspectRatio="none"><ellipse cx="24.150" cy="27.650" rx="22.450" ry="25.950" fill="#fff" stroke="#4583d6" stroke-width="3.400"/></svg>
<span class="t" style="left:2208.2px;top:1028.13px;font-size:22.05px;color:#000;transform:scaleX(0.8044);font-weight:bold;">SR</span>
<div class="a" style="left:67px;top:1166px;width:22px;height:22px;background:#fff;border:2px solid #6e6e6e;border-radius:4.5px;"></div>
<svg class="a" style="left:236.2px;top:1149.3px;" width="23.30000000000001" height="23.0" viewBox="0 0 23 23" preserveAspectRatio="none"><circle cx="11.500" cy="11.500" r="11.500" fill="#2f78c4"/><path d="M8.200 5.400l9.200 6.100-9.200 6.100z" fill="#fff"/></svg>
<span class="t" style="left:269.07px;top:1147.42px;font-size:26.08px;color:#2f78c4;transform:scaleX(1.0295);font-weight:bold;">Research</span>
<span class="t" style="left:236.27px;top:1185.23px;font-size:22.77px;color:#909090;transform:scaleX(1.0292);">Research of query from client</span>
<div class="a" style="left:676px;top:1158.5px;width:192px;height:39.5px;background:#fff;border:2px solid #c8c8c8;border-radius:20px;"></div>
<span class="t" style="left:708.89px;top:1168.96px;font-size:19.77px;color:#222;transform:scaleX(0.9072);">NOT BILLABLE</span>
<span class="t" style="left:1028.0px;top:1166.43px;font-size:22.77px;color:#404040;transform:scaleX(1.0386);">3/12/2020</span>
<span class="t" style="left:1350.0px;top:1166.43px;font-size:22.77px;color:#404040;transform:scaleX(1.0081);">0.75</span>
<span class="t" style="left:1671.0px;top:1166.43px;font-size:22.77px;color:#404040;transform:scaleX(0.9945);">$0.00</span>
<span class="t" style="left:1905.0px;top:1166.43px;font-size:22.77px;color:#404040;transform:scaleX(0.9768);">$0.00</span>
<svg class="a" style="left:2196.1px;top:1149.4px;" width="48.30000000000018" height="55.299999999999955" viewBox="0 0 48.300 55.300" preserveAspectRatio="none"><ellipse cx="24.150" cy="27.650" rx="22.450" ry="25.950" fill="#fff" stroke="#4583d6" stroke-width="3.400"/></svg>
<span class="t" style="left:2208.2px;top:1167.13px;font-size:22.05px;color:#000;transform:scaleX(0.8044);font-weight:bold;">SR</span>
<div class="a" style="left:53px;top:1247px;width:2479px;height:2px;background:#cfcfcf;"></div>
<span class="t" style="left:1350.82px;top:1263.50px;font-size:25.87px;color:#444;transform:scaleX(0.9765);font-weight:bold;">0.85</span>
<span class="t" style="left:1905.8px;top:1263.50px;font-size:25.87px;color:#444;transform:scaleX(0.9681);font-weight:bold;">$20.00</span>
<span class="t" style="left:1989.6px;top:1268.14px;font-size:20.39px;color:#444;transform:scaleX(0.9717);font-weight:bold;">AUD</span>
<div class="a" style="left:53px;top:1304px;width:2479px;height:2px;background:#e6e6e6;"></div>
<div class="a" style="left:64px;top:1313px;width:48px;height:49px;background:#fff;border:2px solid #f6f6f6;"></div>
<div class="a" style="left:117px;top:1313px;width:49px;height:49px;background:#fff;border:2px solid #f6f6f6;"></div>
<div class="a" style="left:231px;top:1313px;width:49px;height:49px;background:#fff;border:2px solid #f6f6f6;"></div>
<div class="a" style="left:285px;top:1313px;width:49px;height:49px;background:#fff;border:2px solid #f6f6f6;"></div>
<div class="a" style="left:174px;top:1313px;width:50px;height:2px;background:#3a3fc0;"></div>
<svg class="a" style="left:80px;top:1330px;" width="14" height="15" viewBox="0 0 14 15" preserveAspectRatio="none"><path d="M0 0h3v15H0zM14 1v13L4 7.500z" fill="#cfcfcf"/></svg>
<svg class="a" style="left:137px;top:1331px;" width="10" height="13" viewBox="0 0 10 13" preserveAspectRatio="none"><path d="M10 0v13L0 6.500z" fill="#cfcfcf"/></svg>
<svg class="a" style="left:250px;top:1331px;" width="10" height="13" viewBox="0 0 10 13" preserveAspectRatio="none"><path d="M0 0v13l10-6.500z" fill="#cfcfcf"/></svg>
<svg class="a" style="left:302px;top:1330px;" width="14" height="15" viewBox="0 0 14 15" preserveAspectRatio="none"><path d="M11 0h3v15h-3zM0 1v13l10-6.500z" fill="#cfcfcf"/></svg>
<span class="t" style="left:192.81px;top:1325.70px;font-size:25.87px;color:#222;transform:scaleX(0.6923);">1</span>
<div class="a" style="left:380px;top:1314px;width:106px;height:50px;background:#fff;border:2px solid #b0b0b0;border-radius:25px;"></div>
<span class="t" style="left:402.89px;top:1327.87px;font-size:24.84px;color:#333;transform:scaleX(1.0074);">25</span>
<svg class="a" style="left:455.7px;top:1337px;" width="14.0" height="10.5" viewBox="0 0 13 9" preserveAspectRatio="none"><path d="M0 0h13L6.500 9z" fill="#222"/></svg>
<span class="t" style="left:497.34px;top:1326.31px;font-size:25.15px;color:#444;transform:scaleX(0.8596);font-weight:bold;">ITEMS PER PAGE</span>
<span class="t" style="left:2323.1px;top:1324.71px;font-size:25.15px;color:#909090;transform:scaleX(0.8965);font-weight:bold;">1 - 3 OF 3 ITEMS</span>
</body></html>
